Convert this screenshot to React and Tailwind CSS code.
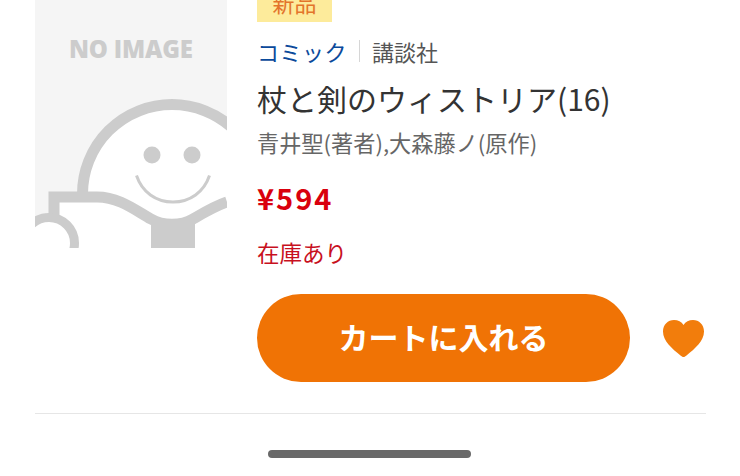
export default function App() {
  return (
    <div className="relative flex h-[476px] w-[740px] flex-col overflow-hidden bg-white font-['Noto_Sans_CJK_JP','Noto_Sans',sans-serif]">
      <div className="flex pl-[35px]">
        <div className="relative h-[248px] w-[192px] shrink-0 overflow-hidden bg-[#f5f5f5]">
          <svg width="192" height="248" viewBox="0 0 192 248" className="block">
            <circle cx="137" cy="194" r="89.5" fill="#fff" stroke="#ccc" strokeWidth="11" />
            <circle cx="117" cy="155" r="8.5" fill="#ccc" />
            <circle cx="157" cy="155" r="8.5" fill="#ccc" />
            <path d="M101.5 175.5C107 192 121 202 138 202C155 202 169 192 174.5 175.5" fill="none" stroke="#ccc" strokeWidth="3" />
            <path d="M19 197H62C84 197 100 210 116 219C128 226 146 226 158 219C170 212 180 206 192 202V248H19Z" fill="#fff" />
            <path d="M19 220V197H62C84 197 100 210 116 219C128 226 146 226 158 219C170 212 180 206 192 202" fill="none" stroke="#ccc" strokeWidth="11" />
            <rect x="116" y="222" width="44" height="26" fill="#ccc" />
            <circle cx="14" cy="243" r="25.5" fill="#fff" stroke="#ccc" strokeWidth="9" />
          </svg>
          <span className="absolute left-[34px] top-[32px] font-['Open_Sans',sans-serif] text-[24px] leading-[34px] font-extrabold tracking-[-0.2px] whitespace-nowrap text-[#cccccc]">
            NO IMAGE
          </span>
        </div>
        <div className="ml-[30px] flex flex-col items-start">
          <div className="mt-[-14px] flex h-[36px] w-[75px] items-center justify-center bg-[#fdeb9b] pb-[4px] text-[22px] leading-none text-[#e3752b]">
            新品
          </div>
          <div className="mt-[13px] flex h-[32px] items-center text-[22px] leading-[32px]">
            <span className="tracking-[0.5px] text-[#0b4a9b]">コミック</span>
            <span className="mx-[12px] h-[22px] w-px bg-[#d6d6d6]" />
            <span className="text-[#555555]">講談社</span>
          </div>
          <div className="mt-[9px] text-[30px] leading-[44px] whitespace-nowrap text-[#333333]">
            杖と剣のウィストリア(16)
          </div>
          <div className="mt-[6px] text-[22.2px] leading-[32px] whitespace-nowrap text-[#666666]">
            青井聖(著者),大森藤ノ(原作)
          </div>
          <div className="mt-[19px] text-[29px] leading-[40px] font-bold tracking-[2px] text-[#d9000d]">¥594</div>
          <div className="mt-[19px] text-[22.5px] leading-[32px] text-[#c8101e]">在庫あり</div>
        </div>
      </div>
      <div className="mt-[26px] ml-[257px] flex items-center">
        <div className="flex h-[88px] w-[373px] items-center justify-center rounded-full bg-[#f07305] pb-[3px] text-[30px] font-bold text-white">
          カートに入れる
        </div>
        <svg width="41" height="37" viewBox="0 0 41 37" className="ml-[33px]">
          <path d="M20.5 37C19.5 37 18.5 36.4 17.5 35.5C9 28.5 0 21 0 11.5C0 4.5 5 0 11 0C15 0 18.5 1.8 20.5 5C22.5 1.8 26 0 30 0C36 0 41 4.5 41 11.5C41 21 32 28.5 23.5 35.5C22.5 36.4 21.5 37 20.5 37Z" fill="#f27d0c" />
        </svg>
      </div>
      <div className="mt-[31px] ml-[35px] h-px w-[671px] bg-[#e6e6e6]" />
      <div className="mt-[36px] ml-[268px] h-[8px] w-[203px] rounded-full bg-[#696969]" />
    </div>
  );
}
